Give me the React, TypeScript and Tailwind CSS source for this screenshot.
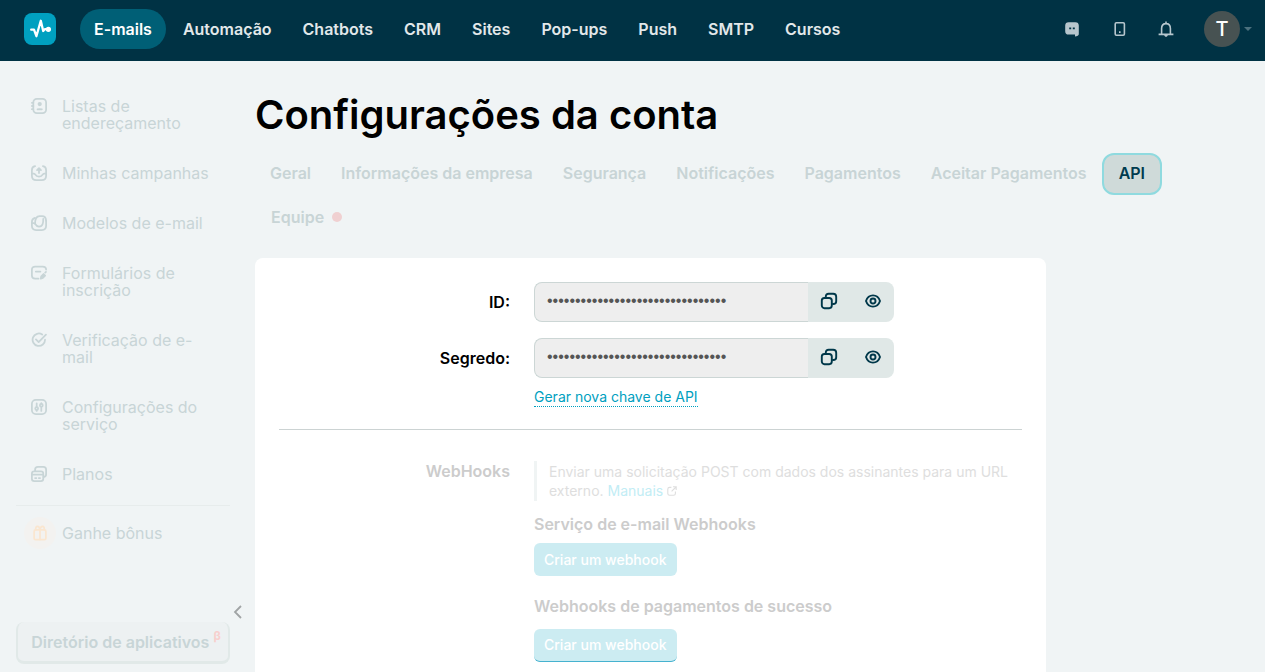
import React from "react";

type IconProps = { children: React.ReactNode };

function LineIcon({ children }: IconProps) {
  return (
    <svg
      viewBox="0 0 18 18"
      className="size-4 shrink-0"
      fill="none"
      stroke="currentColor"
      strokeWidth="2"
      strokeLinecap="round"
      strokeLinejoin="round"
      aria-hidden="true"
    >
      {children}
    </svg>
  );
}

const mainNav = ["E-mails", "Automação", "Chatbots", "CRM", "Sites", "Pop-ups", "Push", "SMTP", "Cursos"];

const sideNav: { label: string; icon: React.ReactNode }[] = [
  {
    label: "Listas de endereçamento",
    icon: (
      <>
        <rect x="2.6" y="1" width="14.4" height="16" rx="4" />
        <path d="M1 5.4h1.6M1 9h1.6M1 12.6h1.6" />
        <circle cx="9.8" cy="6.8" r="1.4" fill="currentColor" />
        <path d="M7.400 12.800c.6-.3 1.400-.4 2.400-.4s1.800.1 2.400.4z" fill="currentColor" />
      </>
    ),
  },
  {
    label: "Minhas campanhas",
    icon: (
      <>
        <path d="M4.600 1.400C2.200 1.800 1 3.400 1 6v6c0 3.200 1.800 5 5 5h6c3.200 0 5-1.800 5-5V6c0-2.600-1.200-4.200-3.600-4.600" />
        <path d="M1.400 9.600h1.800c.8 0 1.300.5 1.700 1.200.8 1.400 2.200 2.200 4.100 2.200s3.300-.8 4.100-2.200c.4-.7.9-1.200 1.700-1.200h1.800" />
        <path d="M9 9V4M6.800 5.800 9 3.600l2.200 2.200" />
      </>
    ),
  },
  {
    label: "Modelos de e-mail",
    icon: (
      <>
        <path d="M4.400 3.200C2.200 3.800 1 5.400 1 7.800v4.400C1 15.400 2.600 17 5.800 17h6.400c3.200 0 4.800-1.600 4.800-4.800V6.400" />
        <path d="M4.600 9.600C4.600 4 6 1.200 9.600 1.200h2.800c2.800 0 4.400 1.600 4.600 5.200" />
        <path d="M1.400 9.200h2c.7 0 1.100.5 1.500 1.200.8 1.700 2.100 2.600 4.100 2.600s3.400-.9 4-2.600c.8-2.200.9-4 .8-6" />
      </>
    ),
  },
  {
    label: "Formulários de inscrição",
    icon: (
      <>
        <path d="M8.400 15.400H4.800C2.300 15.400 1 14.200 1 11.800V5.400C1 3 2.300 1.800 4.800 1.800h8.400c2.500 0 3.800 1.200 3.800 3.400" />
        <path d="M5.400 7.400h5.200" />
        <path d="m11 15.400.5-2.600 2.600-2.600 1.800 1.800-2.600 2.600z" fill="currentColor" />
        <path d="m16 8.600.8-.8" />
      </>
    ),
  },
  {
    label: "Verificação de e-mail",
    icon: (
      <>
        <path d="M12.600 2.800A7 7 0 1 0 15.800 8.600" />
        <path d="m5.600 8.400 3 3L16.800 3" />
      </>
    ),
  },
  {
    label: "Configurações do serviço",
    icon: (
      <>
        <rect x="1" y="1" width="16" height="16" rx="4.400" />
        <path d="M6.400 4.800v4M6.400 12.600v.8M11.600 4.600v.6M11.600 9v4.400" />
        <circle cx="6.400" cy="10.800" r="1.600" />
        <circle cx="11.600" cy="7" r="1.600" />
      </>
    ),
  },
  {
    label: "Planos",
    icon: (
      <>
        <rect x="1" y="6" width="12.800" height="11" rx="2.600" />
        <path d="M1.400 9.600h12.200M4.600 13.600h1.400M8.800 13.600h1.400" />
        <path d="M4.600 5.800V4.200c0-2.100 1-3.200 3.100-3.200h6.200C16 1 17 2.100 17 4.200v5.200c0 1.900-.8 2.900-2.800 3.200" />
      </>
    ),
  },
];

const tabs = [
  "Geral",
  "Informações da empresa",
  "Segurança",
  "Notificações",
  "Pagamentos",
  "Aceitar Pagamentos",
  "API",
];

function Header() {
  return (
    <header className="flex h-[61px] shrink-0 items-center bg-[#003244] px-6 pb-[3px]">
      <a href="#inicio" aria-label="Início" className="mr-6 flex size-8 shrink-0 items-center justify-center rounded-lg bg-[#00a0c0]">
        <svg viewBox="0 0 24 24" className="size-6" fill="none" stroke="#fff" strokeWidth="2.300" strokeLinejoin="round" strokeLinecap="round" aria-hidden="true">
          <path d="M3.200 12.700H6l2.400 6.500 4.400-15.400 2.400 10.200 1.600-1.800h3.600" />
          <circle cx="20.400" cy="12.300" r="1.500" fill="#fff" />
        </svg>
      </a>
      <nav aria-label="Serviços" className="flex min-w-0 flex-1 items-center gap-[3px]">
        {mainNav.map((item) => (
          <a
            key={item}
            href={`#${item}`}
            className={
              item === "E-mails"
                ? "flex h-10 items-center rounded-full bg-[#005f76] px-3.5 text-base font-semibold text-white"
                : "flex h-10 items-center px-3.5 text-base font-semibold text-[#e2e8ea]"
            }
          >
            {item}
          </a>
        ))}
      </nav>
      <div className="-mr-[11px] flex items-center text-[#b6c6cd]">
        <button type="button" aria-label="Suporte" className="mr-8">
          <svg viewBox="0 0 16 16" className="size-4" aria-hidden="true">
            <path d="M4.600 1.200h6.800c2.200 0 3.400 1.200 3.400 3.400v8.600c0 1.200-1.600 2-3.800 2.400v-2H4.600c-2.200 0-3.400-1.200-3.400-3.400V4.600c0-2.200 1.200-3.400 3.400-3.400z" fill="currentColor" />
            <path d="M5.200 7.400h2M8.800 7.400h2" stroke="#003244" strokeWidth="1.800" />
          </svg>
        </button>
        <button type="button" aria-label="Aplicativo móvel" className="mr-[30px]">
          <svg viewBox="0 0 16 16" className="size-4" fill="none" stroke="currentColor" strokeWidth="1.600" aria-hidden="true">
            <rect x="3.200" y="1.800" width="9.200" height="12.400" rx="1.200" />
            <path d="M7 11.200h1.600" strokeWidth="1.800" />
          </svg>
        </button>
        <button type="button" aria-label="Notificações" className="mr-[30px]">
          <svg viewBox="0 0 16 16" className="size-4" fill="none" stroke="currentColor" strokeWidth="1.600" aria-hidden="true">
            <path d="M3.600 12.800V7.400c0-2.800 1.800-4.800 4.400-4.800s4.400 2 4.400 4.800v5.400M.6 13.400h14.800M8 .6v2" />
            <path d="M6.200 14c.2 1.200.8 1.800 1.800 1.800s1.600-.6 1.800-1.800z" fill="currentColor" stroke="none" />
          </svg>
        </button>
        <button type="button" aria-label="Conta" className="flex items-center gap-1">
          <span className="flex size-9 items-center justify-center rounded-full bg-[#475252] text-xl font-medium text-white">T</span>
          <svg viewBox="0 0 8 4" className="h-1 w-2 text-[#4c717e]" aria-hidden="true">
            <path d="M0 0h8L4 4z" fill="currentColor" />
          </svg>
        </button>
      </div>
    </header>
  );
}

function Sidebar() {
  return (
    <aside className="flex w-[255px] shrink-0 flex-col pb-2 pl-4 pr-[25px] pt-[37px] text-[#c8d5d7]">
      <nav aria-label="E-mails" className="flex flex-col gap-[33px] pl-[15px] pr-4">
        {sideNav.map(({ label, icon }) => (
          <a key={label} href={`#${label}`} className="flex gap-[15px] text-base leading-[17px]">
            <LineIcon>{icon}</LineIcon>
            <span>{label}</span>
          </a>
        ))}
      </nav>
      <div className="mt-[22px] border-t border-[#e7ecec] pt-[11px]">
        <a href="#bonus" className="flex items-center gap-1.5 pl-2 text-base">
          <span className="flex size-8 items-center justify-center rounded-full bg-[#f3f2f0] text-[#fae6d0]">
            <LineIcon>
              <rect x="2.400" y="5.600" width="13.200" height="10.800" rx="1.600" />
              <path d="M9 5.600v10.600M9 5.400C8.600 3 7.800 1.600 6.200 1.600S3.800 3.200 4.400 5.400M9 5.400c.4-2.400 1.200-3.800 2.800-3.800s2.400 1.600 1.800 3.800" />
            </LineIcon>
          </span>
          <span>Ganhe bônus</span>
        </a>
      </div>
      <div className="mt-auto">
        <div className="-mr-4 mb-[3px] flex justify-end">
          <button type="button" aria-label="Recolher menu" className="text-[#a0a4a5]">
            <svg viewBox="0 0 16 14" className="h-3.5 w-4" fill="none" stroke="currentColor" strokeWidth="1.800" aria-hidden="true">
              <path d="M11 1 5 7l6 6" />
            </svg>
          </button>
        </div>
        <button
          type="button"
          className="flex h-[42px] w-full items-center justify-center gap-1 whitespace-nowrap rounded-lg border-x-2 border-b-[3px] border-[#e1e9e8] bg-[#edf1f2] pl-1.5 text-base font-semibold"
        >
          Diretório de aplicativos
          <span className="self-start pt-1.5 text-xs font-bold text-[#f8cfcd]">β</span>
        </button>
      </div>
    </aside>
  );
}

function SecretField({ id, label }: { id: string; label: string }) {
  return (
    <>
      <label htmlFor={id} className="self-center text-right text-base font-semibold text-black">
        {label}
      </label>
      <div className="flex h-10 w-[360px] max-w-full">
        <input
          id={id}
          type="password"
          readOnly
          defaultValue="00000000000000000000000000000000"
          className="min-w-0 flex-1 rounded-l-lg border border-r-0 border-[#ccd6d5] bg-[#eeeeee] px-3 pb-0.5 font-['Liberation_Sans',sans-serif] text-base text-[#555555] outline-none"
        />
        <div className="flex w-[86px] items-center justify-between rounded-r-lg bg-[#e0e8e7] px-3 pb-0.5 text-[#00384a]">
          <button type="button" aria-label={`Copiar ${label}`}>
            <svg viewBox="0 0 18 18" className="size-[18px]" fill="none" stroke="currentColor" strokeWidth="1.900" strokeLinejoin="round" aria-hidden="true">
              <rect x="1.800" y="6" width="10" height="10.200" rx="2.600" />
              <path d="M5.800 5.800V4.600c0-1.800 1-2.800 2.800-2.800h4.600c2 0 3 1 3 3v4.400c0 2-1 2.800-3 2.800h-1" />
            </svg>
          </button>
          <button type="button" aria-label={`Mostrar ${label}`}>
            <svg viewBox="0 0 18 18" className="size-[18px]" fill="none" stroke="currentColor" strokeWidth="1.900" aria-hidden="true">
              <path d="M2 9C3.200 5.400 5.800 3.400 9 3.400S14.800 5.400 16 9c-1.200 3.600-3.800 5.600-7 5.600S3.200 12.600 2 9z" />
              <circle cx="9" cy="9" r="2.500" />
            </svg>
          </button>
        </div>
      </div>
    </>
  );
}

export default function App() {
  return (
    <div className="flex h-screen flex-col overflow-hidden bg-[#f0f4f5] font-['Inter','Noto_Sans',sans-serif]">
      <Header />
      <div className="flex min-h-0 flex-1">
        <Sidebar />
        <main className="min-w-0 flex-1 overflow-hidden pr-6 pt-[30px]">
          <h1 className="text-[40px] font-semibold leading-[48px] text-black">Configurações da conta</h1>
          <nav aria-label="Configurações" className="mt-3.5 flex flex-wrap gap-y-0.5 text-base font-semibold text-[#c8d4d6]">
            {tabs.map((tab) => (
              <a
                key={tab}
                href={`#${tab}`}
                className={
                  tab === "API"
                    ? "flex h-[42px] items-center rounded-xl border-2 border-[#8fdadf] bg-[#cfdad9] px-[15px] pb-0.5 text-[#003b4f]"
                    : "flex h-[42px] items-center px-[15px] pb-0.5"
                }
              >
                {tab}
              </a>
            ))}
            <a href="#equipe" className="flex h-[42px] items-center gap-2 px-4 pb-0.5">
              Equipe
              <span className="size-2.5 rounded-full bg-[#f0d0d1]" />
            </a>
          </nav>
          <div className="mt-[19px] max-w-[791px] rounded-lg bg-white px-6 pt-6">
            <div className="grid grid-cols-[231px_1fr] gap-x-6 gap-y-4">
              <SecretField id="api-id" label="ID:" />
              <SecretField id="api-secret" label="Segredo:" />
            </div>
            <div className="flex pl-[255px] pt-2.5">
              <a href="#gerar" className="border-b border-dotted border-[#00a0c0] text-sm leading-[18px] text-[#00a0c0]">
                Gerar nova chave de API
              </a>
            </div>
            <hr className="mt-[22px] border-[#ccd3d3]" />
            <div className="mt-[31px] grid grid-cols-[231px_1fr] gap-x-6">
              <h2 className="text-right text-base font-semibold leading-5 text-[#cccccc]">WebHooks</h2>
              <div className="flex flex-col items-start">
                <div className="border-l-[3px] border-[#f0f4f4] py-px pl-3 text-sm leading-[19px] text-[#dedede]">
                  <span>Enviar uma solicitação POST com dados dos assinantes para um URL externo. </span>
                  <a href="#manuais" className="text-[#c2edf5]">Manuais</a>
                  <svg viewBox="0 0 10 10" className="ml-1 inline-block size-2.5 align-baseline" fill="none" stroke="currentColor" strokeWidth="1.100" aria-hidden="true">
                    <path d="M4.400 1.400H2.600C1.400 1.400.8 2 .8 3.200v4.200c0 1.200.6 1.800 1.800 1.800h4c1.200 0 1.800-.6 1.800-1.800V5.600M6 .800h3.200V4M9 1 4.600 5.400" />
                  </svg>
                </div>
                <h3 className="mt-3 text-base font-semibold leading-[22px] text-[#cccccc]">Serviço de e-mail Webhooks</h3>
                <button type="button" className="mt-2 h-[33px] rounded-md bg-[#ccecf2] px-2.5 text-sm font-medium text-white">
                  Criar um webhook
                </button>
                <h3 className="mt-[19px] text-base font-semibold leading-[22px] text-[#cccccc]">Webhooks de pagamentos de sucesso</h3>
                <button type="button" className="mb-8 mt-3 h-[33px] rounded-md border-b border-[#46b2cf] bg-[#ccecf2] px-2.5 text-sm font-medium text-white">
                  Criar um webhook
                </button>
              </div>
            </div>
          </div>
        </main>
      </div>
    </div>
  );
}
